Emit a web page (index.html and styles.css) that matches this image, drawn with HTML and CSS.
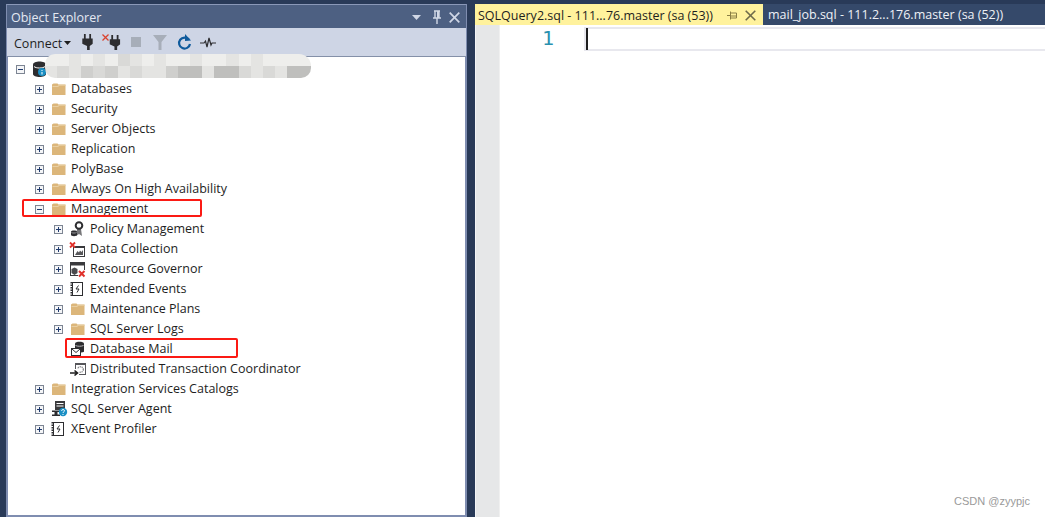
FILE: index.html
```html
<!DOCTYPE html>
<html lang="en">
<head>
<meta charset="utf-8">
<title>Object Explorer</title>
<link rel="stylesheet" href="styles.css">
</head>
<body>
<svg class="defs" width="0" height="0" aria-hidden="true">
  <defs>
    <symbol id="folder" viewBox="0 0 16 16"><path d="M1 5.500V14h13.500V3.500H7.500L6.500 2.500H2.500L1 3.500z" fill="#dcb67a"/><path d="M1.500 5H6.500L8 3.800H14.500V4.800H8.500L7 6H1.500z" fill="#e8cfa3"/></symbol>
    <symbol id="plug" viewBox="0 0 12 18"><path d="M2 0h2v5h4V0h2v5h2v6l-3.500 2.500V18h-3v-4.500L0 11V5h2z" fill="#2d2d30"/></symbol>
    <symbol id="notebook" viewBox="0 0 16 16"><rect x="2.500" y="1.500" width="10" height="13" fill="#fff" stroke="#2d2d30"/><path d="M1.500 1v14" stroke="#2d2d30" stroke-width="2" stroke-dasharray="1.500 1"/><path d="M8.500 4.500L6 8h3l-2 3.500" stroke="#2d2d30" fill="none"/></symbol>
  </defs>
</svg>
<div class="shell">
  <aside class="explorer">
    <header class="title-bar">
      <span class="title">Object Explorer</span>
      <span class="title-actions">
        <svg class="menu-caret" width="9" height="5" viewBox="0 0 9 5"><path d="M0 0h9L4.500 5z" fill="#d0d7e6"/></svg>
        <svg width="10" height="15" viewBox="0 0 10 15"><path d="M2 1h6M3 1v7M7 1v7M1 8h8M5 8v6" stroke="#d0d7e6" stroke-width="1.400" fill="none"/><rect x="5" y="1" width="2" height="7" fill="#d0d7e6"/></svg>
        <svg width="11" height="11" viewBox="0 0 11 11"><path d="M0.700 0.700l9.600 9.600M10.300 0.700l-9.600 9.600" stroke="#d0d7e6" stroke-width="1.700"/></svg>
      </span>
    </header>
    <div class="toolbar">
      <span class="connect">Connect</span>
      <svg class="caret" width="7" height="4" viewBox="0 0 7 4"><path d="M0 0h7L3.500 4z" fill="#1e1e1e"/></svg>
      <svg class="tool t-plug" width="11" height="16" viewBox="0 0 12 18"><use href="#plug"/></svg>
      <svg class="tool t-xplug" width="19" height="16" viewBox="0 0 19 16"><path d="M0.500 0.500l6 6M6.500 0.500l-6 6" stroke="#d9432f" stroke-width="1.300"/><g transform="translate(7.500 1) scale(0.900 0.850)"><use href="#plug" width="12" height="18"/></g></svg>
      <span class="tool t-stop"></span>
      <svg class="tool t-filter" width="14" height="15" viewBox="0 0 14 15"><path d="M0 0h14L8.500 7v8h-3V7z" fill="#a7aeb9"/></svg>
      <svg class="tool t-refresh" width="15" height="17" viewBox="0 0 15 17"><path d="M11.800 5.500A5.500 5.500 0 1 0 13 10" stroke="#0e5a9c" stroke-width="2.200" fill="none"/><path d="M8 0v7l6-.5z" fill="#0e5a9c"/></svg>
      <svg class="tool t-pulse" width="16" height="11" viewBox="0 0 16 11"><path d="M0 6h4l1.500-2L7 10l2-9 2 7 1-2h4" stroke="#2d2d30" stroke-width="1.200" fill="none"/></svg>
    </div>
    <div class="tree">
      <div class="row root">
        <span class="exp minus"></span>
        <svg class="icon" width="16" height="16" viewBox="0 0 16 16"><path d="M1 3.500C1-.5 14-.5 14 3.500V13C14 17 1 17 1 13z" fill="#2d2d30"/><path d="M2 5.500c2 2 9 2 11 0" stroke="#fff" fill="none"/><circle cx="10" cy="11" r="4" fill="#1a8fc4"/><path d="M10 9v1M10 11v2.500" stroke="#fff"/></svg>
        <div class="blur">
          <div class="blur-row"><i class="c1"></i><i class="c1"></i><i class="c2"></i><i class="c1"></i><i class="c2"></i><i class="c1"></i><i class="c3"></i><i class="c2"></i><i class="c1"></i><i class="c2"></i><i class="c1"></i><i class="c1"></i><i class="c2"></i><i class="c1"></i><i class="c1"></i><i class="c2"></i><i class="c1"></i><i class="c2"></i><i class="c1"></i><i class="c1"></i><i class="c1"></i><i class="c1"></i></div>
          <div class="blur-row"><i class="c2"></i><i class="c3"></i><i class="c2"></i><i class="c4"></i><i class="c3"></i><i class="c4"></i><i class="c2"></i><i class="c3"></i><i class="c2"></i><i class="c2"></i><i class="c4"></i><i class="c5"></i><i class="c5"></i><i class="c2"></i><i class="c5"></i><i class="c5"></i><i class="c3"></i><i class="c2"></i><i class="c3"></i><i class="c2"></i><i class="c5"></i><i class="c5"></i></div>
        </div>
      </div>
      <div class="row l1"><span class="exp"></span><svg class="icon" width="16" height="16"><use href="#folder"/></svg><span class="label">Databases</span></div>
      <div class="row l1"><span class="exp"></span><svg class="icon" width="16" height="16"><use href="#folder"/></svg><span class="label">Security</span></div>
      <div class="row l1"><span class="exp"></span><svg class="icon" width="16" height="16"><use href="#folder"/></svg><span class="label">Server Objects</span></div>
      <div class="row l1"><span class="exp"></span><svg class="icon" width="16" height="16"><use href="#folder"/></svg><span class="label">Replication</span></div>
      <div class="row l1"><span class="exp"></span><svg class="icon" width="16" height="16"><use href="#folder"/></svg><span class="label">PolyBase</span></div>
      <div class="row l1"><span class="exp"></span><svg class="icon" width="16" height="16"><use href="#folder"/></svg><span class="label">Always On High Availability</span></div>
      <div class="row l1 mark-mgmt"><span class="exp minus"></span><svg class="icon" width="16" height="16"><use href="#folder"/></svg><span class="label">Management</span></div>
      <div class="row l2"><span class="exp"></span>
        <svg class="icon" width="16" height="16" viewBox="0 0 16 16"><path d="M7 8l-1 7 3-2 3 2-1-7z" fill="#77777a"/><circle cx="9" cy="4.500" r="3.300" fill="#fff" stroke="#2d2d30" stroke-width="2"/><path d="M1 10.500c0-1.500 6-1.500 6 0V14c0 1.500-6 1.500-6 0z" fill="#2d2d30"/><path d="M1.500 11.500c1 .7 4 .7 5 0" stroke="#9a9a9d" fill="none"/></svg>
        <span class="label">Policy Management</span></div>
      <div class="row l2"><span class="exp"></span>
        <svg class="icon" width="16" height="16" viewBox="0 0 16 16"><rect x="3.500" y="5.500" width="11" height="10" fill="#fff" stroke="#3a3a3d"/><rect x="3" y="5" width="12" height="2" fill="#3a3a3d"/><path d="M5 14l2.500-4 1.500 1.500 1-2 1.500 1.500L13 9v5z" fill="#57575a"/><path d="M0 1.500l5 5M5 1.500l-5 5" stroke="#e0302a" stroke-width="1.800"/></svg>
        <span class="label">Data Collection</span></div>
      <div class="row l2"><span class="exp"></span>
        <svg class="icon" width="16" height="16" viewBox="0 0 16 16"><rect x="0.500" y="1.500" width="14" height="13" fill="#fff" stroke="#3a3a3d"/><rect x="0" y="1" width="15" height="3.500" fill="#3a3a3d"/><path d="M1.500 8l3-1.500L7.500 8v4l-3 2-3-2z" fill="#4a4a4d"/><rect x="8" y="9" width="8" height="7" fill="#fff"/><path d="M9 10l5.500 5.500M14.500 10L9 15.500" stroke="#e0302a" stroke-width="2"/></svg>
        <span class="label">Resource Governor</span></div>
      <div class="row l2"><span class="exp"></span>
        <svg class="icon" width="16" height="16"><use href="#notebook"/></svg>
        <span class="label">Extended Events</span></div>
      <div class="row l2"><span class="exp"></span><svg class="icon" width="16" height="16"><use href="#folder"/></svg><span class="label">Maintenance Plans</span></div>
      <div class="row l2"><span class="exp"></span><svg class="icon" width="16" height="16"><use href="#folder"/></svg><span class="label">SQL Server Logs</span></div>
      <div class="row l2 mark-mail"><span class="exp-space"></span>
        <svg class="icon" width="16" height="16" viewBox="0 0 16 16"><path d="M5 2.500c0-2.500 9-2.500 9 0v8c0 1.500-9 1.500-9 0z" fill="#2d2d30"/><path d="M5.500 4.500c2 1 6 1 8 0" stroke="#b8b8bb" fill="none"/><rect x="1.500" y="7.500" width="9" height="7" fill="#fff" stroke="#2d2d30"/><path d="M2 8l4 3.500L10 8" stroke="#2d2d30" fill="none"/></svg>
        <span class="label">Database Mail</span></div>
      <div class="row l2"><span class="exp-space"></span>
        <svg class="icon" width="16" height="16" viewBox="0 0 16 16"><rect x="5.500" y="2.500" width="10" height="11" fill="#fff" stroke="#56565a"/><rect x="5" y="2" width="11" height="2" fill="#56565a"/><circle cx="10.500" cy="8.500" r="2.800" fill="none" stroke="#8a8a8d" stroke-width="1.400" stroke-dasharray="1.200 .8"/><rect x="0" y="8" width="9" height="8" fill="#fff"/><path d="M0 12h7M4.500 9.500L7.500 12l-3 2.500" stroke="#1e1e1e" stroke-width="1.600" fill="none"/></svg>
        <span class="label">Distributed Transaction Coordinator</span></div>
      <div class="row l1"><span class="exp"></span><svg class="icon" width="16" height="16"><use href="#folder"/></svg><span class="label">Integration Services Catalogs</span></div>
      <div class="row l1"><span class="exp"></span>
        <svg class="icon" width="16" height="16" viewBox="0 0 16 16"><rect x="4" y="0" width="10" height="9" fill="#3a3a3d"/><path d="M5.500 2.500h7M5.500 5h7" stroke="#fff"/><path d="M1 9.500h8V11H6.500v2.500H9V15H1v-1.500h2.500V11H1z" fill="#2d2d30"/><circle cx="12" cy="11" r="4.200" fill="#1a8fc4"/><path d="M10.500 9.800c.3-1.700 3-1.700 3 0 0 1-1.500 1-1.500 2.200M12 13v1" stroke="#fff" fill="none"/></svg>
        <span class="label">SQL Server Agent</span></div>
      <div class="row l1"><span class="exp"></span>
        <svg class="icon" width="16" height="16"><use href="#notebook"/></svg>
        <span class="label">XEvent Profiler</span></div>
    </div>
  </aside>
  <main class="editor">
    <div class="tabs">
      <div class="tab active">
        <span class="tab-name">SQLQuery2.sql - 111...76.master (sa (53))</span>
        <svg class="tab-pin" width="10" height="9" viewBox="0 0 10 9"><path d="M0 4.500h3M3.500 0.500v8M3.500 2h6v5h-6M3.500 5h6" stroke="#8a7f45" fill="none"/></svg>
        <svg class="tab-x" width="11" height="11" viewBox="0 0 11 11"><path d="M0.700 0.700l9.600 9.600M10.300 0.700l-9.600 9.600" stroke="#6e6a4a" stroke-width="1.600"/></svg>
      </div>
      <div class="tab">mail_job.sql - 111.2...176.master (sa (52))</div>
    </div>
    <div class="code">
      <div class="gutter"></div>
      <div class="numbers">1</div>
      <div class="code-area"><div class="current-line"><span class="cursor"></span></div></div>
    </div>
    <span class="watermark">CSDN @zyypjc</span>
  </main>
</div>
</body>
</html>
```
FILE: styles.css
```css
*, *::after { box-sizing: border-box; }
html, body { margin: 0; height: 100%; }
body {
  background: #293a58;
  font-family: "Open Sans", "Noto Sans", sans-serif;
  overflow: hidden;
}
.defs { position: absolute; }
.shell {
  display: flex;
  width: 1045px;
  height: 517px;
  padding: 4px 0 0 6px;
  gap: 8px;
}
.explorer {
  width: 461px;
  display: flex;
  flex-direction: column;
  border: 2px solid #7f8db0;
  border-top: 1px solid #8a98b8;
  background: #fff;
}
.title-bar {
  height: 23px;
  margin: 0 -1px 0 -1px;
  background: #4d6082;
  color: #e4e9f2;
  display: flex;
  align-items: center;
  justify-content: space-between;
  padding: 2px 6px 0 4px;
  font-size: 12.500px;
  flex: none;
}
.title-actions { display: flex; align-items: center; gap: 7px; }
.menu-caret { margin-right: 4px; }
.toolbar {
  height: 29px;
  margin: 0 -1px;
  flex: none;
  background: #ced5e5;
  border-bottom: 1px solid #8490a8;
  display: flex;
  align-items: center;
  padding: 2px 0 0 7px;
  font-size: 12.500px;
  color: #1e1e1e;
}
.connect { width: 50px; }
.tool { flex: none; display: block; margin-top: -2px; }
.t-plug { margin-left: 11px; }
.t-xplug { margin-left: 9px; }
.t-stop { width: 10px; height: 10px; background: #a7aeb9; margin-left: 10px; }
.t-filter { margin-left: 12px; }
.t-refresh { margin-left: 10px; }
.t-pulse { margin-left: 8px; }
.tree { flex: 1; padding-top: 2px; color: #1e1e1e; }
.row {
  height: 20px;
  display: flex;
  align-items: center;
  font-size: 12.500px;
  white-space: nowrap;
  position: relative;
}
.root { padding-left: 8px; }
.l1 { padding-left: 27px; }
.l2 { padding-left: 46px; }
.exp {
  width: 9px;
  height: 9px;
  flex: none;
  border: 1px solid #7d8593;
  background: linear-gradient(#1f3a6e, #1f3a6e) center / 5px 1px no-repeat,
              linear-gradient(#1f3a6e, #1f3a6e) center / 1px 5px no-repeat,
              #f4f5f7;
}
.exp.minus {
  background: linear-gradient(#1f3a6e, #1f3a6e) center / 5px 1px no-repeat, #f4f5f7;
}
.exp-space { width: 9px; flex: none; }
.icon { flex: none; margin-left: 7px; display: block; overflow: visible; }
.label { margin-left: 4px; line-height: 20px; }
.blur {
  position: absolute;
  left: 37px;
  top: -5px;
  width: 266px;
  height: 24px;
  border-radius: 10px 12px 10px 10px;
  overflow: hidden;
  display: flex;
  flex-direction: column;
}
.blur-row { display: flex; flex: 1; }
.blur-row i { flex: 1; display: block; }
.c1 { background: #eeeeec; }
.c2 { background: #e4e4e2; }
.c3 { background: #d9d9d7; }
.c4 { background: #cfcfcd; }
.c5 { background: #bfbfbd; }
.mark-mgmt::after, .mark-mail::after {
  content: "";
  position: absolute;
  border: 2px solid #fb1a14;
  border-radius: 2px;
}
.mark-mgmt::after { left: 14px; top: 0; width: 180px; height: 18px; }
.mark-mail::after { left: 57px; top: -1px; width: 173px; height: 20px; }
.editor { flex: 1; display: flex; flex-direction: column; position: relative; min-width: 0; }
.tabs { display: flex; height: 21px; flex: none; font-size: 12.500px; }
.tab {
  background: #35496a;
  color: #eef1f6;
  flex: 1;
  padding: 1px 0 0 5px;
  line-height: 20px;
  white-space: nowrap;
}
.tab.active {
  flex: none;
  width: 288px;
  height: 22px;
  background: #fff29d;
  color: #1e1e1e;
  padding-left: 3px;
  display: flex;
  align-items: center;
}
.tab-name { width: 249px; }
.tab-x { margin-left: 8px; }
.code { flex: 1; display: flex; background: #fff; }
.gutter { width: 25px; flex: none; background: #e6e7e8; border-left: 1px solid #f3f4f6; border-right: 1px solid #f0f0f0; }
.numbers {
  width: 54px;
  flex: none;
  padding-top: 2px;
  font-family: "DejaVu Sans Mono", monospace;
  font-size: 20px;
  line-height: 22px;
  color: #2b91af;
  text-align: right;
}
.code-area { flex: 1; padding: 2px 0 0 30px; }
.current-line {
  height: 24px;
  border: 2px solid #e8e8ee;
  border-right: 0;
}
.cursor { display: block; width: 2px; height: 22px; margin-top: -1px; background: #1e1e1e; }
.watermark {
  position: absolute;
  right: 15px;
  bottom: 10px;
  font-family: "Liberation Sans", sans-serif;
  font-size: 11px;
  color: #9a9a9a;
}
```
